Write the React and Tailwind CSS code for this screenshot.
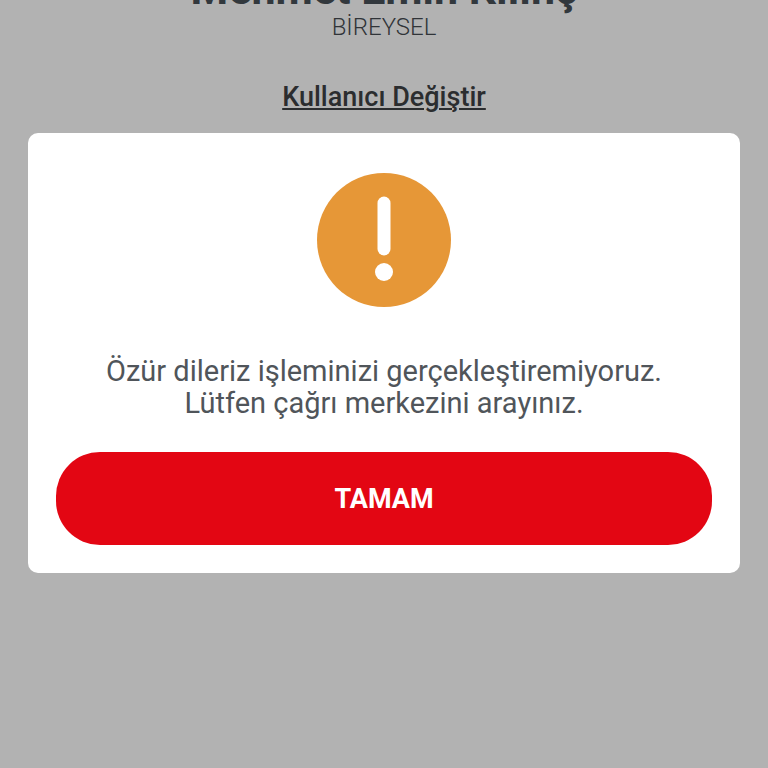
import React from "react";

function WarningIcon() {
  return (
    <svg className="w-[134px] h-[134px]" viewBox="0 0 134 134" aria-hidden="true">
      <circle cx="67" cy="67" r="67" fill="#e69737" />
      <rect x="60.5" y="23.5" width="13" height="59" rx="6.5" fill="#fff" />
      <circle cx="67" cy="99" r="9" fill="#fff" />
    </svg>
  );
}

export default function App() {
  return (
    <div className="min-h-screen overflow-hidden bg-[#b2b2b2] px-7 font-['Roboto','Liberation_Sans',sans-serif]">
      {/* Account header, scrolled partly out of view */}
      <header className="-mt-9 flex flex-col items-center text-center">
        <h1 className="text-[43px] leading-[50px] font-bold text-[#32383d]">Mehmet Emin Kılınç</h1>
        <p className="text-2xl leading-[26px] font-light text-[#303438]">BİREYSEL</p>
        <a
          href="#"
          className="mt-10 text-[27px] leading-[34px] font-medium text-[#2b2d2f] underline decoration-2 underline-offset-2"
        >
          Kullanıcı Değiştir
        </a>
      </header>

      {/* Error dialog */}
      <main
        role="alertdialog"
        aria-describedby="message"
        className="mt-[19px] flex flex-col items-center rounded-[10px] bg-white px-7 pt-10 pb-7"
      >
        <WarningIcon />
        <p id="message" className="mt-12 text-center text-[29px] leading-8 font-normal text-[#50555a]">
          Özür dileriz işleminizi gerçekleştiremiyoruz.
          <br />
          Lütfen çağrı merkezini arayınız.
        </p>
        <button
          type="button"
          className="mt-[33px] h-[93px] w-full rounded-[44px] bg-[#e30613] pt-0.5 text-[27px] font-bold text-white"
        >
          TAMAM
        </button>
      </main>
    </div>
  );
}
